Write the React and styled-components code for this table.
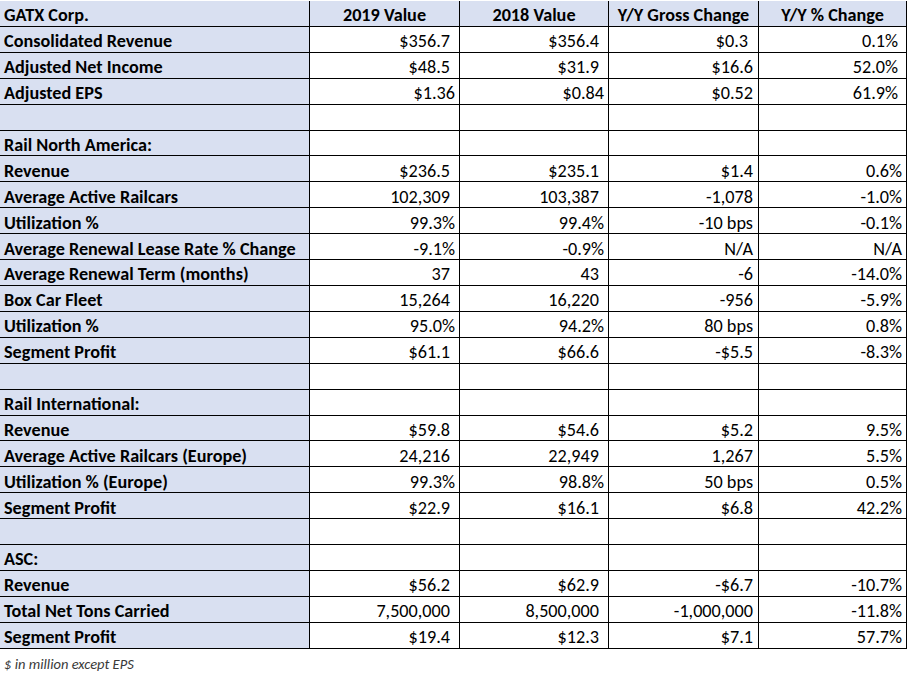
import styled, { createGlobalStyle } from 'styled-components';

const GlobalStyle = createGlobalStyle`
    html, body {
        margin: 0;
        padding: 0;
        background: #ffffff;
    }
    body {
        font-family: Carlito, Lato, 'Liberation Sans', sans-serif;
        color: #000000;
    }
`;

const Page = styled.div`
    width: 907px;
    height: 675px;
    overflow: hidden;
    background: #ffffff;
`;

const Sheet = styled.div`
    display: grid;
    grid-template-columns: 310px 150px 149px 150px 148px;
    grid-auto-rows: 25.92px;
    padding-top: 1px;
`;

const Cell = styled.div`
    box-sizing: border-box;
    display: flex;
    align-items: flex-end;
    justify-content: ${(p) => (p.$align === 'left' ? 'flex-start' : p.$align === 'center' ? 'center' : 'flex-end')};
    padding: 0 ${(p) => p.$pad || 0}px 1.5px ${(p) => (p.$align === 'left' ? 4 : 0)}px;
    border-bottom: 1px solid #000;
    border-right: 1px solid #000;
    background: ${(p) => (p.$shade ? '#d9e0f1' : '#ffffff')};
    font-size: 18.2px;
    font-weight: ${(p) => (p.$bold ? 700 : 400)};
    line-height: 18px;
    white-space: nowrap;
`;

const Note = styled.div`
    padding: 6px 0 0 4px;
    font-size: 14.5px;
    font-style: italic;
    color: #3a3a3a;
`;

const headers = ['2019 Value', '2018 Value', 'Y/Y Gross Change', 'Y/Y % Change'];

const rows = [
    { label: 'Consolidated Revenue', values: ['$356.7', '$356.4', '$0.3', '0.1%'], pads: [9, 9, 10, 8] },
    { label: 'Adjusted Net Income', values: ['$48.5', '$31.9', '$16.6', '52.0%'], pads: [9, 9, 5, 8] },
    { label: 'Adjusted EPS', values: ['$1.36', '$0.84', '$0.52', '61.9%'], pads: [4, 4, 5, 8] },
    { blank: true },
    { label: 'Rail North America:', section: true },
    { label: 'Revenue', values: ['$236.5', '$235.1', '$1.4', '0.6%'] },
    { label: 'Average Active Railcars', values: ['102,309', '103,387', '-1,078', '-1.0%'] },
    { label: 'Utilization %', values: ['99.3%', '99.4%', '-10 bps', '-0.1%'] },
    { label: 'Average Renewal Lease Rate % Change', values: ['-9.1%', '-0.9%', 'N/A', 'N/A'] },
    { label: 'Average Renewal Term (months)', values: ['37', '43', '-6', '-14.0%'] },
    { label: 'Box Car Fleet', values: ['15,264', '16,220', '-956', '-5.9%'] },
    { label: 'Utilization %', values: ['95.0%', '94.2%', '80 bps', '0.8%'] },
    { label: 'Segment Profit', values: ['$61.1', '$66.6', '-$5.5', '-8.3%'] },
    { blank: true },
    { label: 'Rail International:', section: true },
    { label: 'Revenue', values: ['$59.8', '$54.6', '$5.2', '9.5%'] },
    { label: 'Average Active Railcars (Europe)', values: ['24,216', '22,949', '1,267', '5.5%'] },
    { label: 'Utilization % (Europe)', values: ['99.3%', '98.8%', '50 bps', '0.5%'] },
    { label: 'Segment Profit', values: ['$22.9', '$16.1', '$6.8', '42.2%'] },
    { blank: true },
    { label: 'ASC:', section: true },
    { label: 'Revenue', values: ['$56.2', '$62.9', '-$6.7', '-10.7%'] },
    { label: 'Total Net Tons Carried', values: ['7,500,000', '8,500,000', '-1,000,000', '-11.8%'] },
    { label: 'Segment Profit', values: ['$19.4', '$12.3', '$7.1', '57.7%'] },
];

function defaultPad(value, col) {
    if (col === 2) return 5;
    if (col === 3) return 4;
    return value.endsWith('%') ? 4 : 9;
}

export default function App() {
    return (
        <Page>
            <GlobalStyle />
            <Sheet>
                <Cell $shade $bold $align="left">GATX Corp.</Cell>
                {headers.map((h) => (
                    <Cell key={h} $shade $bold $align="center">
                        {h}
                    </Cell>
                ))}
                {rows.map((row, index) => (
                    <RowCells key={index} row={row} />
                ))}
            </Sheet>
            <Note>$ in million except EPS</Note>
        </Page>
    );
}

function RowCells({ row }) {
    const values = row.values || ['', '', '', ''];
    return (
        <>
            <Cell $shade $bold $align="left">
                {row.label || ''}
            </Cell>
            {values.map((v, i) => (
                <Cell key={i} $pad={row.pads ? row.pads[i] : defaultPad(v, i)}>
                    {v}
                </Cell>
            ))}
        </>
    );
}
